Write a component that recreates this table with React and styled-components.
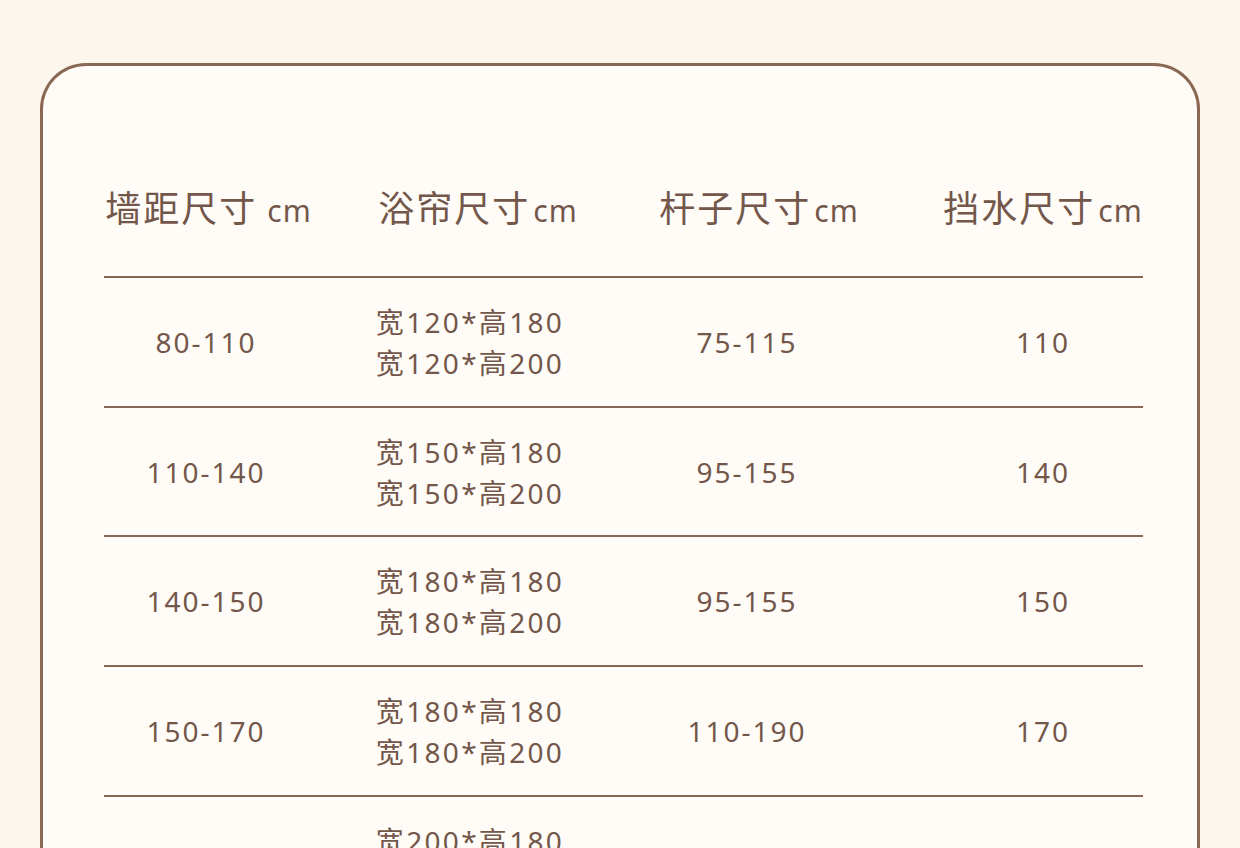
import React from "react";
import styled, { createGlobalStyle } from "styled-components";

const brown = "#8a6752";
const ink = "#73574a";

const GlobalStyle = createGlobalStyle`
  html, body {
    margin: 0;
    padding: 0;
    background: #fdf6ec;
    height: 848px;
    overflow: hidden;
  }
  body {
    font-family: "Noto Sans", "Noto Sans CJK SC", sans-serif;
    color: ${ink};
  }
`;

const Page = styled.div`
  padding: 63px 40px 0 40px;
`;

const Card = styled.div`
  background: #fffcf8;
  border: 3px solid ${brown};
  border-bottom: none;
  border-radius: 46px 46px 0 0;
  height: 900px;
  padding: 105px 54px 0 61px;
`;

const Row = styled.div`
  display: grid;
  grid-template-columns: 204px 324px 236px 1fr;
  align-items: center;
  height: ${(p) => p.$height}px;
  border-bottom: 2px solid ${brown};
  padding-bottom: ${(p) => p.$pad || 0}px;
`;

const HeadCell = styled.div`
  display: flex;
  align-items: baseline;
  justify-content: center;
  padding-left: ${(p) => p.$shift || 0}px;
  font-family: "Noto Sans CJK SC", sans-serif;
  font-size: 36px;
  letter-spacing: 2px;
  white-space: nowrap;
  ${(p) => p.$end && "justify-self: end; width: 200px;"}
`;

const Unit = styled.span`
  font-family: "Noto Sans", sans-serif;
  font-size: 30px;
  letter-spacing: 1px;
  margin-left: ${(p) => (p.$gap ? 10 : 3)}px;
`;

const Cell = styled.div`
  text-align: center;
  font-size: 28px;
  letter-spacing: 2px;
  line-height: 40px;
  white-space: nowrap;
  padding-right: ${(p) => p.$nudge || 0}px;
  ${(p) => p.$end && "justify-self: end; width: 200px;"}
`;

const SizeList = styled.div`
  justify-self: center;
  text-align: left;
  font-size: 28px;
  letter-spacing: 2.3px;
  line-height: 40px;
  white-space: nowrap;
`;

const Han = styled.span`
  font-family: "Noto Sans CJK SC", sans-serif;
`;

const headers = [
  { label: "墙距尺寸", gap: true, shift: 5 },
  { label: "浴帘尺寸", shift: 16 },
  { label: "杆子尺寸", shift: 18 },
  { label: "挡水尺寸" },
];

const rows = [
  { wall: "80-110", w: 120, rod: "75-115", guard: "110" },
  { wall: "110-140", w: 150, rod: "95-155", guard: "140" },
  { wall: "140-150", w: 180, rod: "95-155", guard: "150" },
  { wall: "150-170", w: 180, rod: "110-190", guard: "170" },
  { wall: "170-200", w: 200, rod: "110-190", guard: "200" },
];

export default function App() {
  return (
    <Page>
      <GlobalStyle />
      <Card>
        <Row $height={70} $pad={35}>
          {headers.map((h, i) => (
            <HeadCell key={h.label} $end={i === 3} $shift={h.shift}>
              {h.label}
              <Unit $gap={h.gap}>cm</Unit>
            </HeadCell>
          ))}
        </Row>
        {rows.map((r) => (
          <Row key={r.wall} $height={127.7}>
            <Cell>{r.wall}</Cell>
            <SizeList>
              <div>
                <Han>宽</Han>
                {r.w}*<Han>高</Han>180
              </div>
              <div>
                <Han>宽</Han>
                {r.w}*<Han>高</Han>200
              </div>
            </SizeList>
            <Cell $nudge={6}>{r.rod}</Cell>
            <Cell $end>{r.guard}</Cell>
          </Row>
        ))}
      </Card>
    </Page>
  );
}
